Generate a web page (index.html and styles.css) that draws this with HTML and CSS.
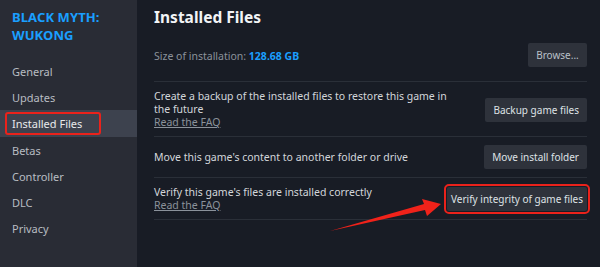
FILE: index.html
```html
<!DOCTYPE html>
<html>
<head>
<meta charset="utf-8">
<link rel="stylesheet" href="styles.css">
</head>
<body>
<div class="app">
  <aside class="sidebar">
    <div class="game-title">BLACK MYTH:<br>WUKONG</div>
    <nav class="menu">
      <div class="item">General</div>
      <div class="item">Updates</div>
      <div class="item active"><span class="hl">Installed Files</span></div>
      <div class="item">Betas</div>
      <div class="item">Controller</div>
      <div class="item">DLC</div>
      <div class="item">Privacy</div>
    </nav>
  </aside>
  <main class="main">
    <h1 class="title">Installed Files</h1>
    <div class="row size-row">
      <div class="size">Size of installation: <span class="val">128.68 GB</span></div>
      <button class="btn browse">Browse...</button>
    </div>
    <div class="row r2">
      <div class="desc">Create a backup of the installed files to restore this game in the future<br><span class="faq">Read the FAQ</span></div>
      <button class="btn">Backup game files</button>
    </div>
    <div class="row r3">
      <div class="desc">Move this game's content to another folder or drive</div>
      <button class="btn">Move install folder</button>
    </div>
    <div class="row r4">
      <div class="desc">Verify this game's files are installed correctly<br><span class="faq">Read the FAQ</span></div>
      <button class="btn verify">Verify integrity of game files</button>
    </div>
    <svg class="arrow" width="600" height="267" viewBox="0 0 600 267">
      <path d="M330 231 L424 204 L422 199 L441 204 L427 216 L425 210 Z" fill="#f0221a"/>
    </svg>
  </main>
</div>
</body>
</html>
```
FILE: styles.css
```css
* { box-sizing: border-box; }
html, body { margin: 0; padding: 0; }
body {
  width: 600px; height: 267px; overflow: hidden;
  background: #181c25;
  font-family: "Noto Sans", "Open Sans", Arial, sans-serif;
}
.app { display: flex; height: 267px; }
.sidebar {
  width: 137px; flex: none;
  background: #292c35;
  padding-top: 8px;
}
.game-title {
  color: #1a9fff; font-weight: 700; font-size: 13px; line-height: 18px;
  padding-left: 12px; letter-spacing: 0.1px;
}
.menu { margin-top: 14px; }
.item {
  height: 26px; display: flex; align-items: center;
  padding-left: 12px; color: #b8bcc2; font-size: 11px;
}
.item.active { background: #3d424e; color: #e8eaec; height: 27px; padding-left: 5px; }
.hl {
  border: 2px solid #ea221b; border-radius: 3px;
  padding: 0 0 0 5px; height: 23px; display: flex; align-items: center;
  width: 96px;
}
.main { flex: 1; padding: 0 13px 0 17px; position: relative; }
.title {
  margin: 0; color: #f2f4f6; font-size: 15.5px; font-weight: 700; line-height: 20px;
  padding-top: 7px;
}
.row {
  display: flex; justify-content: space-between; align-items: center;
  border-bottom: 1px solid #2a2f38;
}
.size-row { height: 55px; padding-top: 4px; }
.size { color: #8b929b; font-size: 10.5px; }
.val { color: #1a9fff; font-weight: 700; }
.btn {
  font-family: inherit; font-size: 10px; color: #dfe2e6;
  background: #2e323b; border: none; border-radius: 2px;
  height: 24px; padding: 0 8px; flex: none;
}
.browse { width: 59px; padding: 0; color: #b9c0c8; margin-top: -3px; }
.desc { color: #d3d6da; font-size: 10.5px; line-height: 13px; max-width: 310px; }
.faq { color: #8b929b; text-decoration: underline; }
.r2 { height: 55px; padding-top: 1px; }
.r3 { height: 41px; }
.r4 { height: 42px; }
.verify {
  width: 140px; padding: 0; margin-right: 0;
  outline: 2px solid #ea221b; outline-offset: 1px;
}
.arrow { position: absolute; left: -137px; top: 0; pointer-events: none; }
```
